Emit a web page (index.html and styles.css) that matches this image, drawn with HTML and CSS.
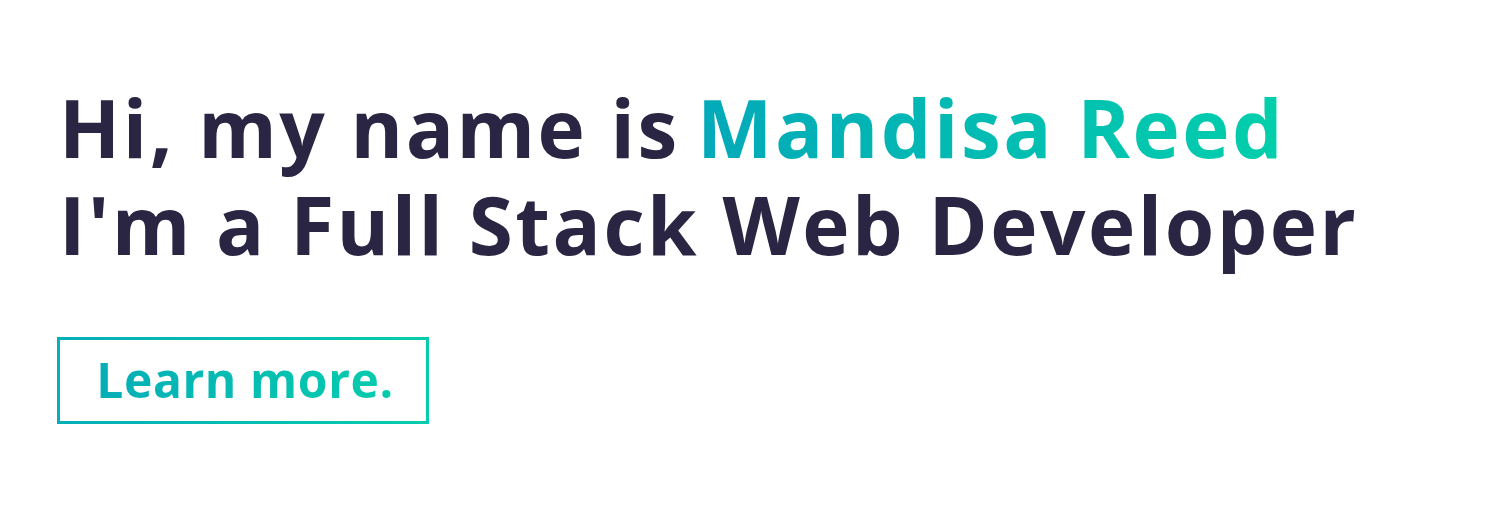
FILE: index.html
```html
<!DOCTYPE html>
<html lang="en">
<head>
<meta charset="utf-8">
<title>Mandisa Reed</title>
<link rel="stylesheet" href="styles.css">
</head>
<body>
<main class="hero">
  <h1 class="hero-title">
    <span class="line">Hi, my name is <span class="accent">Mandisa Reed</span></span>
    <span class="line">I'm a Full Stack Web Developer</span>
  </h1>
  <a class="btn" href="#about"><span class="btn-text">Learn more.</span></a>
</main>
</body>
</html>
```
FILE: styles.css
```css
html, body {
  margin: 0;
  padding: 0;
  background: #ffffff;
}
body {
  font-family: "Open Sans", "Noto Sans", sans-serif;
  color: #2a2542;
}
.hero {
  display: flex;
  flex-direction: column;
  align-items: flex-start;
  padding: 78px 0 0 57px;
}
.hero-title {
  display: flex;
  flex-direction: column;
  margin: 0 0 0 2px;
  font-size: 80px;
  font-weight: 700;
  line-height: 97px;
  letter-spacing: 2.5px;
  color: #2a2542;
}
.line {
  display: block;
  height: 97px;
  white-space: nowrap;
}
.accent {
  display: inline-block;
  margin-left: -6px;
  background: linear-gradient(90deg, #03a9b9, #02cfab);
  -webkit-background-clip: text;
  background-clip: text;
  color: transparent;
}
.btn {
  display: inline-block;
  margin-top: 65px;
  width: 366px;
  box-sizing: content-box;
  border: 3px solid #0abdb2;
  border-image: linear-gradient(90deg, #06aeb7, #05ccad) 1;
  padding: 11px 0 12px;
  text-align: center;
  text-decoration: none;
}
.btn-text {
  display: inline-block;
  margin-left: 4px;
  font-size: 48px;
  font-weight: 700;
  line-height: 58px;
  letter-spacing: 0.6px;
  background: linear-gradient(90deg, #06aeb7, #05ccad);
  -webkit-background-clip: text;
  background-clip: text;
  color: transparent;
}
```
